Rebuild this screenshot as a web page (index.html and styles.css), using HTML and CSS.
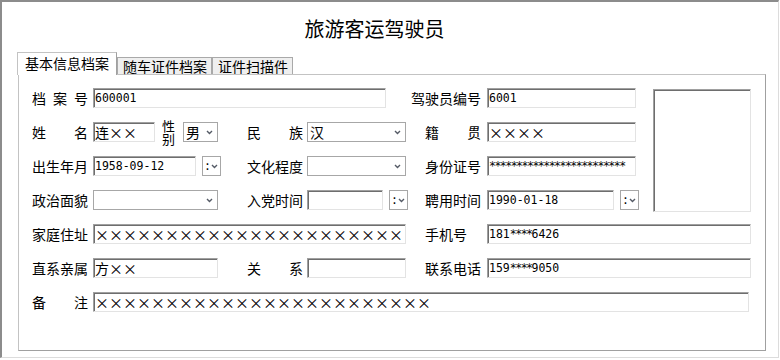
FILE: index.html
```html
<!DOCTYPE html>
<html lang="zh-CN">
<head>
  <meta charset="UTF-8">
  <title>旅游客运驾驶员</title>
  <link rel="stylesheet" href="styles.css">
</head>
<body>
  <div class="window">
    <h1 class="title">旅游客运驾驶员</h1>

    <div class="tabs">
      <div class="tab active">基本信息档案</div>
      <div class="tab">随车证件档案</div>
      <div class="tab">证件扫描件</div>
    </div>

    <div class="panel">
      <div class="form">
        <div class="lbl">档案号</div>
        <div class="box w293 span3">600001</div>
        <div class="lbl wide">驾驶员编号</div>
        <div class="box w149">6001</div>
        <div class="photo"></div>

        <div class="lbl">姓名</div>
        <div class="group">
          <div class="box w62"><span class="cn">连××</span></div>
          <div class="stack">性别</div>
          <div class="sel w35"><span class="cn">男</span><svg width="7" height="5" viewBox="0 0 7 5"><path d="M1 1l2.5 2.5L6 1"/></svg></div>
        </div>
        <div class="lbl">民族</div>
        <div class="sel w99"><span class="cn">汉</span><svg width="7" height="5" viewBox="0 0 7 5"><path d="M1 1l2.5 2.5L6 1"/></svg></div>
        <div class="lbl">籍贯</div>
        <div class="box w149"><span class="cn">××××</span></div>

        <div class="lbl">出生年月</div>
        <div class="group">
          <div class="box w103">1958-09-12</div>
          <div class="sel mini"><span>:</span><svg width="7" height="5" viewBox="0 0 7 5"><path d="M1 1l2.5 2.5L6 1"/></svg></div>
        </div>
        <div class="lbl">文化程度</div>
        <div class="sel w99"><span></span><svg width="7" height="5" viewBox="0 0 7 5"><path d="M1 1l2.5 2.5L6 1"/></svg></div>
        <div class="lbl">身份证号</div>
        <div class="box w149"><span class="mask">*************************</span></div>

        <div class="lbl">政治面貌</div>
        <div class="sel w125"><span></span><svg width="7" height="5" viewBox="0 0 7 5"><path d="M1 1l2.5 2.5L6 1"/></svg></div>
        <div class="lbl">入党时间</div>
        <div class="group">
          <div class="box w76"></div>
          <div class="sel mini"><span>:</span><svg width="7" height="5" viewBox="0 0 7 5"><path d="M1 1l2.5 2.5L6 1"/></svg></div>
        </div>
        <div class="lbl">聘用时间</div>
        <div class="group">
          <div class="box w127">1990-01-18</div>
          <div class="sel mini"><span>:</span><svg width="7" height="5" viewBox="0 0 7 5"><path d="M1 1l2.5 2.5L6 1"/></svg></div>
        </div>

        <div class="lbl">家庭住址</div>
        <div class="box w313 span3"><span class="cn">××××××××××××××××××××××</span></div>
        <div class="lbl plain">手机号</div>
        <div class="box w264 span2">181<span class="mask">****</span>6426</div>

        <div class="lbl">直系亲属</div>
        <div class="box w125"><span class="cn">方××</span></div>
        <div class="lbl">关系</div>
        <div class="box w99"></div>
        <div class="lbl">联系电话</div>
        <div class="box w264 span2">159<span class="mask">****</span>9050</div>

        <div class="lbl">备注</div>
        <div class="box w656 span6"><span class="cn">××××××××××××××××××××××××</span></div>
      </div>
    </div>
  </div>
</body>
</html>
```

FILE: styles.css
```css
body {
  margin: 0;
  font-family: "Noto Sans CJK SC", sans-serif;
  font-size: 14px;
  color: #000;
  background: #fff;
}
.window {
  width: 779px;
  height: 358px;
  box-sizing: border-box;
  border-style: solid;
  border-width: 2px 1px 1px 2px;
  border-color: #8c8c8c #dcdcdc #dcdcdc #8c8c8c;
}
.title {
  margin: 15px 0 0;
  padding-right: 31px;
  height: 24px;
  line-height: 24px;
  font-size: 20px;
  font-weight: normal;
  text-align: center;
}
.tabs {
  display: flex;
  align-items: flex-end;
  height: 22px;
  margin: 11px 0 0 15px;
}
.tab {
  box-sizing: border-box;
  height: 17px;
  line-height: 16px;
  padding: 0 4px 0 5px;
  border: 1px solid #a9a9a9;
  border-bottom: 0;
  background: #efefef;
  white-space: nowrap;
}
.tab.active {
  position: relative;
  z-index: 1;
  height: 23px;
  margin-bottom: -1px;
  padding: 2px 7px 0;
  background: #fff;
  border-color: #c3c3c3 #a0a0a0 #fff #c3c3c3;
}
.panel {
  box-sizing: border-box;
  width: 748px;
  height: 277px;
  margin-left: 16px;
  padding: 13px 0 0 13px;
  border: 1px solid;
  border-color: #c3c3c3 #a0a0a0 #a0a0a0 #c3c3c3;
}
.form {
  display: grid;
  grid-template-columns: 61px 154px 60px 118px 62px 166px 98px;
  grid-auto-rows: 20px;
  row-gap: 14px;
  align-items: center;
}
.lbl {
  width: 56px;
  line-height: 20px;
  text-align: justify;
  text-align-last: justify;
}
.lbl.wide {
  width: 70px;
  margin-left: -14px;
}
.lbl.plain {
  text-align-last: left;
}
.group {
  display: flex;
  align-items: center;
}
.box {
  box-sizing: border-box;
  height: 20px;
  display: flex;
  align-items: center;
  padding-left: 1px;
  border: 1px solid;
  border-color: #a0a0a0 #e3e3e3 #e3e3e3 #a0a0a0;
  box-shadow: inset 1px 1px 0 #6e6e6e;
  font-family: "DejaVu Sans Mono", monospace;
  font-size: 11.5px;
  white-space: nowrap;
  overflow: hidden;
}
.cn {
  font-family: "Noto Sans CJK SC", sans-serif;
  font-size: 14px;
}
.mask {
  letter-spacing: -1.5px;
}
.sel {
  box-sizing: border-box;
  height: 20px;
  display: flex;
  align-items: center;
  justify-content: space-between;
  padding: 0 4px 0 2px;
  border: 1px solid #a7a7a7;
  background: #fff;
  font-family: "DejaVu Sans Mono", monospace;
  font-size: 11.5px;
}
.sel svg {
  flex: none;
  fill: none;
  stroke: #555b66;
  stroke-width: 1.4;
}
.sel.mini {
  width: 19px;
  margin-left: 6px;
  padding: 0 4px 0 1px;
}
.stack {
  width: 13px;
  margin: 0 8px 0 7px;
  font-size: 13px;
  line-height: 13px;
}
.photo {
  grid-column: 7;
  grid-row: 1 / span 4;
  align-self: start;
  box-sizing: border-box;
  height: 123px;
  margin-top: 1px;
  border: 1px solid;
  border-color: #a0a0a0 #e3e3e3 #e3e3e3 #a0a0a0;
  box-shadow: inset 1px 1px 0 #6e6e6e;
}
.span2 { grid-column: span 2; }
.span3 { grid-column: span 3; }
.span6 { grid-column: span 6; }
.w35 { width: 35px; }
.w62 { width: 62px; }
.w76 { width: 76px; }
.w99 { width: 99px; }
.w103 { width: 103px; }
.w125 { width: 125px; }
.w127 { width: 127px; }
.w149 { width: 149px; }
.w264 { width: 264px; }
.w293 { width: 293px; }
.w313 { width: 313px; }
.w656 { width: 656px; }
```
